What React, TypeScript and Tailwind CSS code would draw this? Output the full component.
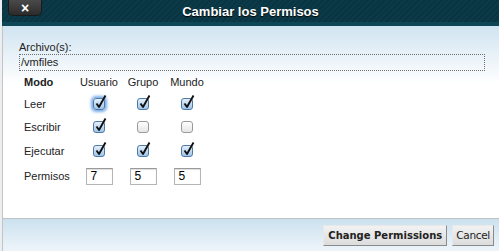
import React from 'react';

function Check({ checked, focus }: { checked: boolean; focus?: boolean }) {
  return (
    <span
      className={`relative inline-block w-[12px] h-[12px] rounded-[3px] border ${
        checked
          ? 'border-[#4f79a6] bg-[linear-gradient(#e4f0fb,#9fc5ea)]'
          : 'border-[#9a9a9a] bg-[linear-gradient(#ffffff,#e6e6e6)]'
      } ${focus ? 'shadow-[0_0_3px_2px_#78acea]' : ''}`}
    >
      {checked && (
        <svg className="absolute left-[0px] top-[-5px]" width="14" height="16" viewBox="0 0 14 16">
          <path d="M2.5 9.5 L5 13 L11.5 1.5" fill="none" stroke="#111" strokeWidth="1.9" strokeLinejoin="round" />
        </svg>
      )}
    </span>
  );
}

function Num({ value }: { value: string }) {
  return (
    <span className="inline-block w-[27px] h-[17px] border border-[#b5b5b5] border-t-[#9a9a9a] bg-white shadow-[inset_0_1px_1px_#ddd] pl-[4px] text-[12px] leading-[15px] text-black">
      {value}
    </span>
  );
}

const rows = [
  { label: 'Leer', v: [true, true, true], h: 'h-[22px]' },
  { label: 'Escribir', v: [true, false, false], h: 'h-[24px]' },
  { label: 'Ejecutar', v: [true, true, true], h: 'h-[24px]' },
];

export default function App() {
  return (
    <div className="w-[499px] h-[251px] flex bg-white overflow-hidden font-['Liberation_Sans',Arial,sans-serif] text-[11px] text-[#222]">
      <div className="w-[2px] bg-[#eceff2]" />
      <div className="flex-1 flex flex-col">
        {/* Title bar */}
        <div className="relative h-[26px] bg-[repeating-linear-gradient(135deg,#0c3a48_0px,#0c3a48_2px,#093441_2px,#093441_4px)] border-b-[4px] border-[#0d4654] flex items-center justify-center">
          <div className="absolute left-[6px] top-0 w-[34px] h-[16px] rounded-b-[5px] bg-[linear-gradient(#4a4a4a,#2b2b2b)] border border-t-0 border-[#1a1a1a] flex items-center justify-center text-white font-bold text-[14px] leading-none">
            ×
          </div>
          <span className="text-white font-bold text-[13px] mt-[2px] [text-shadow:0_1px_1px_#000]">Cambiar los Permisos</span>
        </div>

        {/* Body */}
        <div className="flex-1 border-l border-[#c4c4c4] bg-[linear-gradient(#d0e4f1,#ffffff_58px)] pt-[14px] pl-[16px] pr-[14px]">
          <div className="h-[14px] leading-[14px]">Archivo(s):</div>
          <div className="h-[17px] border border-dotted border-[#6f6f6f] pl-[1px] leading-[14px]">/vmfiles</div>
          <div className="pl-[5px]">
            <div className="grid grid-cols-[53px_44px_44px_44px] h-[22px] items-center">
              <span className="font-bold">Modo</span>
              <span className="text-center">Usuario</span>
              <span className="text-center">Grupo</span>
              <span className="text-center">Mundo</span>
            </div>
            {rows.map((r, i) => (
              <div key={r.label} className={`grid grid-cols-[53px_44px_44px_44px] ${r.h} items-center`}>
                <span>{r.label}</span>
                {r.v.map((c, j) => (
                  <span key={j} className="flex justify-center">
                    <Check checked={c} focus={i === 0 && j === 0} />
                  </span>
                ))}
              </div>
            ))}
            <div className="grid grid-cols-[53px_44px_44px_44px] h-[26px] items-center">
              <span>Permisos</span>
              <span className="flex justify-center"><Num value="7" /></span>
              <span className="flex justify-center"><Num value="5" /></span>
              <span className="flex justify-center"><Num value="5" /></span>
            </div>
          </div>
        </div>

        {/* Footer */}
        <div className="h-[33px] border-t border-l border-[#c4c4c4] border-t-[#c2c2c2] bg-[linear-gradient(#cbe1ef,#eef5fa)] flex items-start justify-end pt-[6px] pr-[5px] gap-[5px] font-['DejaVu_Sans',Verdana,sans-serif]">
          <button className="h-[21px] px-[4px] bg-[linear-gradient(#f2f2f2,#dcdcdc)] border border-[#e8e8e8] border-r-[#8a8a8a] border-b-[#8a8a8a] text-[10px] font-bold text-[#222]">
            Change Permissions
          </button>
          <button className="h-[21px] px-[3px] bg-[linear-gradient(#f2f2f2,#dcdcdc)] border border-[#e8e8e8] border-r-[#8a8a8a] border-b-[#8a8a8a] text-[10.5px] text-[#222] tracking-[-0.3px]">
            Cancel
          </button>
        </div>
      </div>
    </div>
  );
}
